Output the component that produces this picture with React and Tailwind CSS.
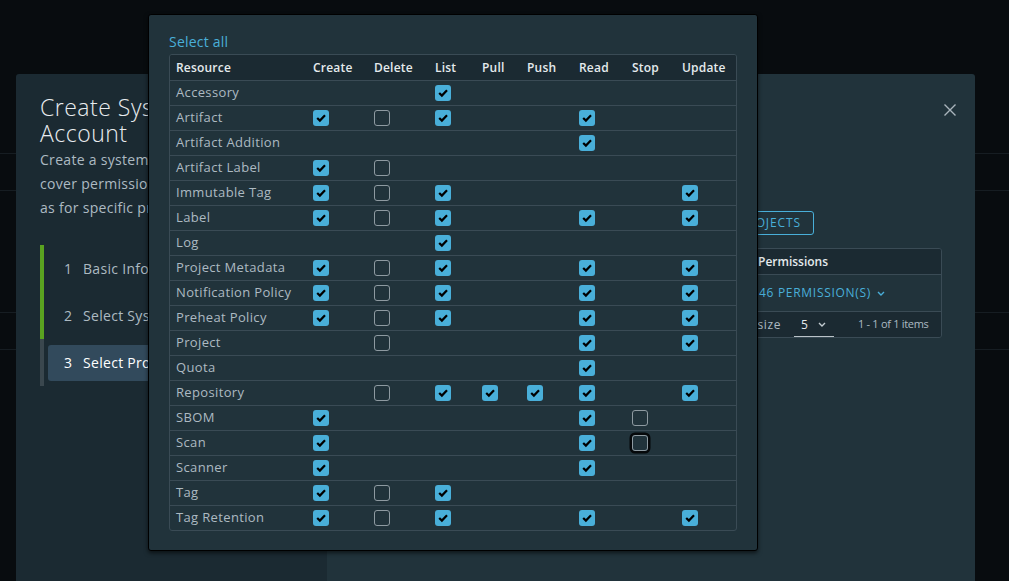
import React from "react";

const COLS = ["Create", "Delete", "List", "Pull", "Push", "Read", "Stop", "Update"];

const ROWS = [
  ["Accessory", "..x....."],
  ["Artifact", "xox..x.."],
  ["Artifact Addition", ".....x.."],
  ["Artifact Label", "xo......"],
  ["Immutable Tag", "xox....x"],
  ["Label", "xox..x.x"],
  ["Log", "..x....."],
  ["Project Metadata", "xox..x.x"],
  ["Notification Policy", "xox..x.x"],
  ["Preheat Policy", "xox..x.x"],
  ["Project", ".o...x.x"],
  ["Quota", ".....x.."],
  ["Repository", ".oxxxx.x"],
  ["SBOM", "x....xo."],
  ["Scan", "x....xf."],
  ["Scanner", "x....x.."],
  ["Tag", "xox....."],
  ["Tag Retention", "xox..x.x"],
];

const GRID = "grid grid-cols-[136px_61px_61px_47px_45px_52px_53px_50px_61px]";

function Box({ state }) {
  if (state === "x") {
    return (
      <span className="flex h-4 w-4 items-center justify-center rounded-[3px] bg-[#49afd9]">
        <svg width="16" height="16" viewBox="0 0 16 16">
          <polyline points="4.2,8 6.9,10.6 12,5.3" fill="none" stroke="#000" strokeWidth="2.2" strokeLinecap="butt" strokeLinejoin="miter" />
        </svg>
      </span>
    );
  }
  if (state === "o") {
    return <span className="block h-4 w-4 rounded-[3px] border border-[#8e9aa1]" />;
  }
  if (state === "f") {
    return <span className="block h-4 w-4 rounded-[3px] border border-[#8e9aa1] shadow-[0_0_0_2.5px_#05080a]" />;
  }
  return null;
}

function Chevron({ color = "#49afd9", w = 8, h = 5 }) {
  return (
    <svg width={w} height={h} viewBox="0 0 8 5">
      <polyline points="1,1 4,4 7,1" fill="none" stroke={color} strokeWidth="1.4" />
    </svg>
  );
}

function PermissionDialog() {
  return (
    <div className="absolute left-[148px] top-[14px] w-[610px] h-[537px] rounded-[3px] border border-black bg-[#21333b] px-5 pt-[17px] shadow-[0_2px_4px_rgba(0,0,0,0.6)]">
      <div className="h-5 text-[14px] leading-5 text-[#49afd9] tracking-[0.2px]">Select all</div>
      <div className="mt-[2px] overflow-hidden rounded-[3px] border border-[#3a4b55]">
        <div className={`${GRID} h-[25px] items-center bg-[#1b2a32] pt-[1px] text-[12px] font-semibold text-[#e5eaed] tracking-[0.2px]`}>
          <div className="pl-[6px]">Resource</div>
          {COLS.map((c) => (
            <div key={c} className="pl-[7px]">{c}</div>
          ))}
        </div>
        {ROWS.map(([name, s]) => (
          <div key={name} className={`${GRID} h-[25px] items-center border-t border-[#3a4b55] text-[13px] text-[#adbac2] tracking-[0.35px]`}>
            <div className="pl-[6px] whitespace-nowrap">{name}</div>
            {s.split("").map((st, i) => (
              <div key={i} className="pl-[7px] flex items-center">
                <Box state={st} />
              </div>
            ))}
          </div>
        ))}
      </div>
    </div>
  );
}

function Step({ n, label, done, active }) {
  return (
    <div className={`flex h-[47px] items-center border-l-4 ${done ? "border-[#5aa220]" : "border-[#3a474e]"} pl-1`}>
      <div className={`flex h-9 flex-1 items-center rounded-l-[3px] pl-4 text-[14px] tracking-[0.3px] whitespace-nowrap ${active ? "bg-[#324a5c] text-white" : "text-[#adbac2]"}`}>
        <span className="w-[19px]">{n}</span>
        <span>{label}</span>
      </div>
    </div>
  );
}

export default function App() {
  return (
    <div className="relative h-[581px] w-[1009px] overflow-hidden bg-[#080c0f] font-['Open_Sans',sans-serif]">
      {/* dimmed page behind */}
      <div className="flex flex-col">
        <div className="h-[153px]" />
        <div className="h-[38px] border-y border-[#161d22]" />
        <div className="h-[121px]" />
        <div className="h-[38px] border-y border-[#161d22]" />
      </div>

      {/* wizard modal */}
      <div className="absolute left-[16px] top-[74px] flex h-[520px] w-[959px] overflow-hidden rounded-[3px]">
        <div className="w-[311px] shrink-0 bg-[#1b2a32] pl-6 pt-5 overflow-hidden">
          <div className="text-[23px] font-light leading-[26px] tracking-[0.5px] text-[#e9ecef] whitespace-nowrap">
            <div>Create System Robot</div>
            <div>Account</div>
          </div>
          <div className="mt-[2px] text-[14px] leading-6 tracking-[0.3px] text-[#adbac2] whitespace-nowrap">
            <div>Create a system robot account that will</div>
            <div>cover permissions for the system as well</div>
            <div>as for specific projects.</div>
          </div>
          <div className="mt-[25px]">
            <Step n="1" label="Basic Information" done />
            <Step n="2" label="Select System Permissions" done />
            <Step n="3" label="Select Project Permissions" active />
          </div>
        </div>

        <div className="flex flex-1 flex-col bg-[#21333b] pl-6 pr-[33px]">
          <div className="-mr-[14px] flex justify-end pt-[30px]">
            <svg width="12" height="12" viewBox="0 0 12 12">
              <path d="M0.5 0.5 L11.5 11.5 M11.5 0.5 L0.5 11.5" stroke="#a9b5bc" strokeWidth="1.4" />
            </svg>
          </div>
          <div className="mt-[95px] flex items-center justify-between pr-[128px]">
            <span className="text-[14px] text-[#adbac2]">Cover all projects</span>
            <div className="flex h-6 items-center rounded-[3px] border border-[#49afd9] pl-3 pr-[12px] text-[12px] font-medium uppercase tracking-[0.9px] text-[#49afd9]">
              Select Projects
            </div>
          </div>
          <div className="mt-[13px] overflow-hidden rounded-[3px] border border-[#3a4b55]">
            <div className="flex h-[25px] items-center bg-[#1b2a32] text-[12px] font-semibold text-[#e5eaed]">
              <div className="w-[394px] pl-3">Project</div>
              <div className="pl-3">Permissions</div>
            </div>
            <div className="flex h-[37px] items-center border-t border-[#3a4b55]">
              <div className="w-[394px] pl-3 text-[13px] text-[#adbac2]">library</div>
              <div className="flex items-center gap-[6px] pl-[13px] text-[12px] font-medium tracking-[0.7px] text-[#49afd9]">
                <span>46 PERMISSION(S)</span>
                <Chevron />
              </div>
            </div>
            <div className="flex h-[26px] items-center justify-end border-t border-[#3a4b55] bg-[#1b2a32] pr-[13px] text-[12px] text-[#adbac2]">
              <span className="tracking-[0.6px]">Page size</span>
              <div className="ml-[13px] flex h-full w-10 items-center justify-between border-b border-[#b9c3c8] pl-[7px] pr-[8px] pt-[1px]">
                <span className="text-[12px] text-[#e5eaed]">5</span>
                <Chevron color="#c3ccd1" />
              </div>
              <span className="ml-6 w-[70px] whitespace-nowrap text-[11px] tracking-[-0.3px]">1 - 1 of 1 items</span>
            </div>
          </div>
        </div>
      </div>

      <PermissionDialog />
    </div>
  );
}
